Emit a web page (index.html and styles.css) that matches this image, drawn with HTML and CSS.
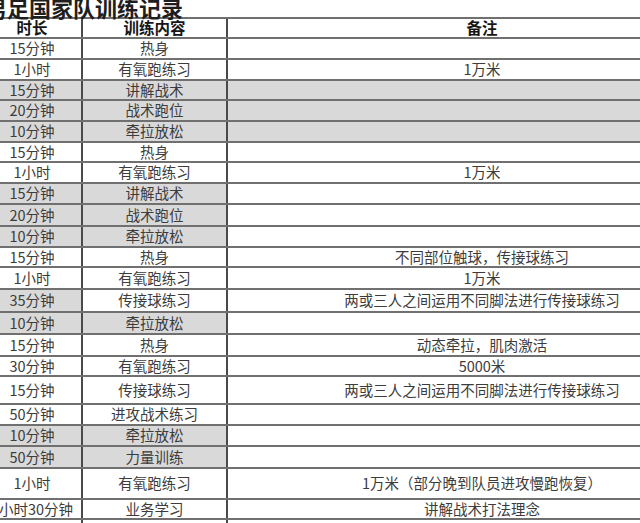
FILE: index.html
```html
<!DOCTYPE html>
<html lang="zh-CN">
<head>
<meta charset="utf-8">
<title>男足国家队训练记录</title>
<link rel="stylesheet" href="styles.css">
</head>
<body>
<div class="page">
  <div class="title">男足国家队训练记录</div>
  <div class="sheet">
    <div class="row head r20"><div class="c">时长</div><div class="c">训练内容</div><div class="c">备注</div></div>
    <div class="row r21"><div class="c">15分钟</div><div class="c">热身</div><div class="c"></div></div>
    <div class="row r21"><div class="c">1小时</div><div class="c">有氧跑练习</div><div class="c">1万米</div></div>
    <div class="row r20"><div class="c g">15分钟</div><div class="c g">讲解战术</div><div class="c g"></div></div>
    <div class="row r21"><div class="c g">20分钟</div><div class="c g">战术跑位</div><div class="c g"></div></div>
    <div class="row r21"><div class="c g">10分钟</div><div class="c g">牵拉放松</div><div class="c g"></div></div>
    <div class="row r20"><div class="c">15分钟</div><div class="c">热身</div><div class="c"></div></div>
    <div class="row r21"><div class="c">1小时</div><div class="c">有氧跑练习</div><div class="c">1万米</div></div>
    <div class="row r21"><div class="c g">15分钟</div><div class="c g">讲解战术</div><div class="c"></div></div>
    <div class="row r22"><div class="c g">20分钟</div><div class="c g">战术跑位</div><div class="c"></div></div>
    <div class="row r21"><div class="c g">10分钟</div><div class="c g">牵拉放松</div><div class="c"></div></div>
    <div class="row r20"><div class="c">15分钟</div><div class="c">热身</div><div class="c">不同部位触球，传接球练习</div></div>
    <div class="row r22"><div class="c">1小时</div><div class="c">有氧跑练习</div><div class="c">1万米</div></div>
    <div class="row r23"><div class="c g">35分钟</div><div class="c">传接球练习</div><div class="c">两或三人之间运用不同脚法进行传接球练习</div></div>
    <div class="row r22"><div class="c g">10分钟</div><div class="c g">牵拉放松</div><div class="c"></div></div>
    <div class="row r22"><div class="c">15分钟</div><div class="c">热身</div><div class="c">动态牵拉，肌肉激活</div></div>
    <div class="row r20"><div class="c">30分钟</div><div class="c">有氧跑练习</div><div class="c">5000米</div></div>
    <div class="row r28"><div class="c">15分钟</div><div class="c">传接球练习</div><div class="c">两或三人之间运用不同脚法进行传接球练习</div></div>
    <div class="row r21"><div class="c">50分钟</div><div class="c">进攻战术练习</div><div class="c"></div></div>
    <div class="row r21"><div class="c g">10分钟</div><div class="c g">牵拉放松</div><div class="c"></div></div>
    <div class="row r22"><div class="c g">50分钟</div><div class="c g">力量训练</div><div class="c"></div></div>
    <div class="row r31"><div class="c">1小时</div><div class="c">有氧跑练习</div><div class="c">1万米（部分晚到队员进攻慢跑恢复）</div></div>
    <div class="row r20"><div class="c">1小时30分钟</div><div class="c">业务学习</div><div class="c">讲解战术打法理念</div></div>
    <div class="row r21"><div class="c"></div><div class="c"></div><div class="c"></div></div>
  </div>
</div>
</body>
</html>
```
FILE: styles.css
```css
html, body {
  margin: 0;
  padding: 0;
  background: #ffffff;
  overflow: hidden;
}
.page {
  width: 640px;
  height: 523px;
  overflow: hidden;
  font-family: "Noto Sans CJK SC", "Noto Sans", sans-serif;
  color: #3c3c3c;
}
.title {
  height: 17px;
  margin-left: -15px;
  font-size: 22px;
  line-height: 14px;
  font-weight: 700;
  color: #1e1e1e;
  white-space: nowrap;
}
.sheet {
  margin-left: -17px;
  width: 753px;
  border-top: 2px solid #707070;
}
.row {
  display: grid;
  grid-template-columns: 100px 145px 508px;
  box-sizing: border-box;
  border-bottom: 2px solid #707070;
}
.r20 { height: 20px; }
.r21 { height: 21px; }
.r22 { height: 22px; }
.r23 { height: 23px; }
.r28 { height: 28px; }
.r31 { height: 31px; }
.c {
  display: flex;
  align-items: center;
  justify-content: center;
  font-size: 14.5px;
  line-height: 1;
  white-space: nowrap;
  box-sizing: border-box;
  border-right: 2px solid #4a4a4a;
}
.c:last-child {
  border-right: none;
}
.g {
  background: #d9d9d9;
}
.head .c {
  font-size: 15.5px;
  font-weight: 700;
  color: #161616;
}
```
